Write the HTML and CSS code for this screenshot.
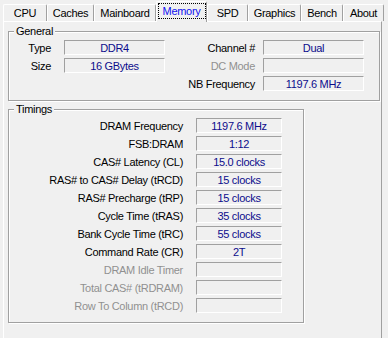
FILE: index.html
```html
<!DOCTYPE html>
<html lang="en">
<head>
    <meta charset="UTF-8">
    <title>CPU-Z Memory</title>
    <link rel="stylesheet" href="styles.css">
</head>
<body>

    <!-- Tab strip -->
    <div class="tabs">
        <div class="tab tab-cpu">CPU</div>
        <div class="tab tab-caches">Caches</div>
        <div class="tab tab-mainboard">Mainboard</div>
        <div class="tab tab-memory active"><span class="focus">Memory</span></div>
        <div class="tab tab-spd">SPD</div>
        <div class="tab tab-graphics">Graphics</div>
        <div class="tab tab-bench">Bench</div>
        <div class="tab tab-about">About</div>
    </div>

    <div class="panel">

        <!-- General -->
        <div class="group general">
            <span class="legend">General</span>
            <div class="general-grid">
                <span class="label">Type</span>
                <span class="field">DDR4</span>
                <span class="label">Channel #</span>
                <span class="field">Dual</span>

                <span class="label">Size</span>
                <span class="field">16 GBytes</span>
                <span class="label off">DC Mode</span>
                <span class="field"></span>

                <span></span>
                <span></span>
                <span class="label">NB Frequency</span>
                <span class="field">1197.6 MHz</span>
            </div>
        </div>

        <!-- Timings -->
        <div class="group timings">
            <span class="legend">Timings</span>
            <div class="timings-grid">
                <span class="label">DRAM Frequency</span>
                <span class="field">1197.6 MHz</span>
                <span class="label">FSB:DRAM</span>
                <span class="field">1:12</span>
                <span class="label">CAS# Latency (CL)</span>
                <span class="field">15.0 clocks</span>
                <span class="label">RAS# to CAS# Delay (tRCD)</span>
                <span class="field">15 clocks</span>
                <span class="label">RAS# Precharge (tRP)</span>
                <span class="field">15 clocks</span>
                <span class="label">Cycle Time (tRAS)</span>
                <span class="field">35 clocks</span>
                <span class="label">Bank Cycle Time (tRC)</span>
                <span class="field">55 clocks</span>
                <span class="label">Command Rate (CR)</span>
                <span class="field">2T</span>
                <span class="label off">DRAM Idle Timer</span>
                <span class="field"></span>
                <span class="label off">Total CAS# (tRDRAM)</span>
                <span class="field"></span>
                <span class="label off">Row To Column (tRCD)</span>
                <span class="field"></span>
            </div>
        </div>

    </div>

</body>
</html>
```

FILE: styles.css
```css
body {
    margin: 0;
    height: 338px;
    overflow: hidden;
    background: #f0f0f0;
    font-family: "Liberation Sans", Arial, sans-serif;
    font-size: 11px;
    letter-spacing: -0.3px;
    color: #000;
}

/* tabs */
.tabs {
    display: flex;
    align-items: flex-end;
    height: 21px;
    padding-left: 3px;
}
.tab {
    box-sizing: border-box;
    height: 17px;
    display: flex;
    align-items: center;
    justify-content: center;
    border-top: 1px solid #fff;
    border-left: 1px solid #fff;
    border-right: 1px solid #a0a0a0;
    border-radius: 2px 2px 0 0;
    line-height: 13px;
}
.tab-cpu { width: 44px; }
.tab-caches { width: 47px; }
.tab-mainboard { width: 62px; }
.tab-memory { width: 51px; }
.tab-spd { width: 41px; }
.tab-graphics { width: 53px; }
.tab-bench { width: 42px; }
.tab-about { width: 41px; }

.tab.active {
    position: relative;
    z-index: 1;
    height: 21px;
    margin-bottom: -1px;
    align-items: flex-start;
    padding-top: 1px;
    background: #f0f0f0;
    color: #1010f0;
}
.focus {
    box-sizing: border-box;
    width: 48px;
    height: 16px;
    line-height: 14px;
    text-align: center;
    border: 1px dotted #000;
}

/* page */
.panel {
    box-sizing: border-box;
    width: 379px;
    height: 317px;
    margin-left: 3px;
    padding: 9px 0 0 4px;
    border-top: 1px solid #fff;
    border-left: 1px solid #fff;
    border-right: 1px solid #a0a0a0;
}

.group {
    position: relative;
    box-sizing: border-box;
    border: 1px solid #a0a0a0;
    box-shadow: inset 1px 1px #fff, 1px 1px #fff;
    padding-top: 8px;
}
.legend {
    position: absolute;
    top: -7px;
    left: 5px;
    padding: 0 2px;
    line-height: 13px;
    background: #f0f0f0;
}
.general {
    width: 372px;
    height: 70px;
}
.timings {
    width: 296px;
    height: 214px;
    margin-top: 8px;
}

.general-grid {
    display: grid;
    grid-template-columns: 55px 101px 98px 101px;
    grid-auto-rows: 15px;
    row-gap: 3px;
}
.general-grid .label:nth-child(4n+1) { padding-right: 13px; }
.general-grid .label:nth-child(4n+3) { padding-right: 8px; }

.timings-grid {
    display: grid;
    grid-template-columns: 187px 86px;
    grid-auto-rows: 15px;
    row-gap: 3px;
}
.timings-grid .label { padding-right: 13px; }

.label {
    padding-top: 1px;
    text-align: right;
    line-height: 15px;
    white-space: nowrap;
}
.label.off {
    color: #909090;
}
.field {
    box-sizing: border-box;
    height: 15px;
    line-height: 15px;
    text-align: center;
    color: #0c0c8c;
    border-top: 1px solid #a0a0a0;
    border-left: 1px solid #a0a0a0;
    border-bottom: 1px solid #fff;
    border-right: 1px solid #fff;
}
```
